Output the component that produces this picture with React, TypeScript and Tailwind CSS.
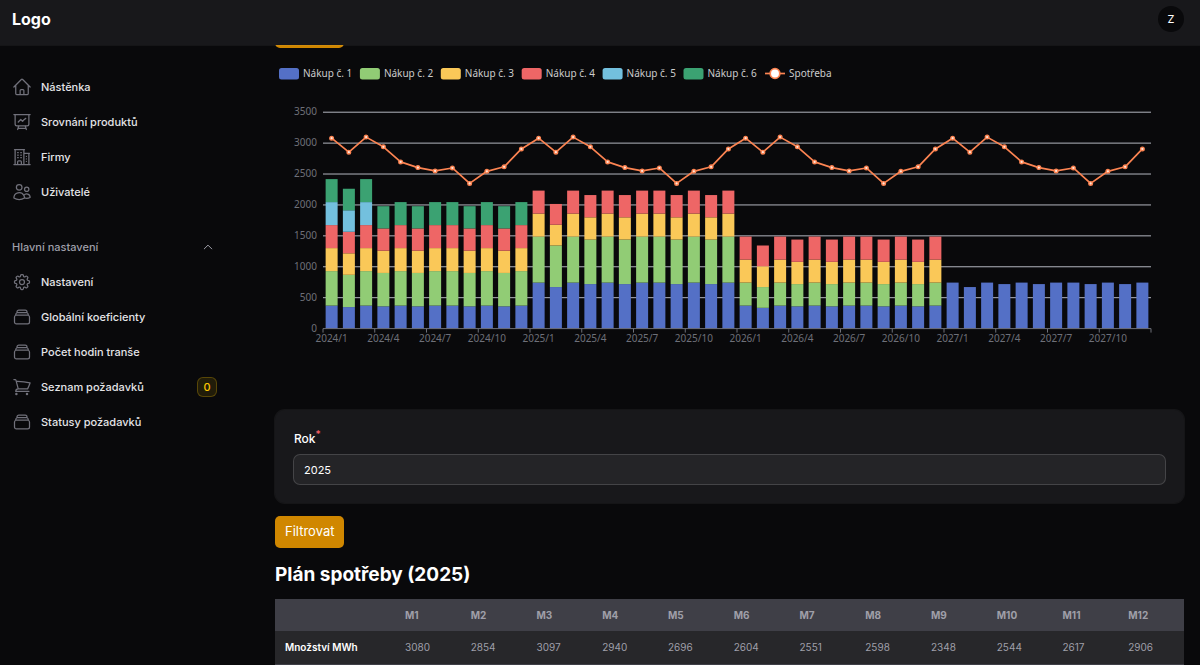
import { useState } from 'react';
import type { IconType } from 'react-icons';
import {
  HiOutlineBuildingOffice2,
  HiOutlineChevronUp,
  HiOutlineCog8Tooth,
  HiOutlineHome,
  HiOutlinePresentationChartLine,
  HiOutlineRectangleStack,
  HiOutlineShoppingCart,
  HiOutlineUsers,
} from 'react-icons/hi2';

type NavItem = { label: string; icon: IconType; badge?: number };

const mainLinks: NavItem[] = [
  { label: 'Nástěnka', icon: HiOutlineHome },
  { label: 'Srovnání produktů', icon: HiOutlinePresentationChartLine },
  { label: 'Firmy', icon: HiOutlineBuildingOffice2 },
  { label: 'Uživatelé', icon: HiOutlineUsers },
];

const settingsLinks: NavItem[] = [
  { label: 'Nastavení', icon: HiOutlineCog8Tooth },
  { label: 'Globální koeficienty', icon: HiOutlineRectangleStack },
  { label: 'Počet hodin tranše', icon: HiOutlineRectangleStack },
  { label: 'Seznam požadavků', icon: HiOutlineShoppingCart, badge: 0 },
  { label: 'Statusy požadavků', icon: HiOutlineRectangleStack },
];

const consumption = [3080, 2854, 3097, 2940, 2696, 2604, 2551, 2598, 2348, 2544, 2617, 2906];

const series = [
  { name: 'Nákup č. 1', color: '#5470c6' },
  { name: 'Nákup č. 2', color: '#91cc75' },
  { name: 'Nákup č. 3', color: '#fac858' },
  { name: 'Nákup č. 4', color: '#ee6666' },
  { name: 'Nákup č. 5', color: '#73c0de' },
  { name: 'Nákup č. 6', color: '#3ba272' },
];

// purchased power in MW per series, by year
const power: Record<number, number[]> = {
  2024: [0.5, 0.75, 0.5, 0.5, 0, 0.5],
  2025: [1, 1, 0.5, 0.5, 0, 0],
  2026: [0.5, 0.5, 0.5, 0.5, 0, 0],
  2027: [1, 0, 0, 0, 0, 0],
};

const months = [2024, 2025, 2026, 2027].flatMap((year) =>
  consumption.map((used, i) => {
    const hours = new Date(year, i + 1, 0).getDate() * 24;
    const mw = [...power[year]];
    // purchase no. 5 covers the first quarter of 2024 only
    if (year === 2024 && i < 3) mw[4] = 0.5;
    return { label: `${year}/${i + 1}`, used, values: mw.map((v) => v * hours) };
  })
);

const LEFT = 48;
const RIGHT = 876;
const BASE = 264.6;
const STEP = (RIGHT - LEFT) / months.length;
const BAR = 12;

const yOf = (value: number) => BASE - (value * 216.4) / 3500;
const xOf = (index: number) => LEFT + STEP * (index + 0.5);

function Chart() {
  const points = months.map((m, i) => `${xOf(i)},${yOf(m.used)}`).join(' ');

  return (
    <svg viewBox="0 0 909 346" className="mt-4 block w-full font-['Noto_Sans',sans-serif] text-[10px]">
      {series.map((s, i) => (
        <g key={s.name}>
          <rect x={4 + i * 80.9} y={4} width={20} height={11.5} rx={2.5} fill={s.color} />
          <text x={28 + i * 80.9} y={13} fill="#cccccc">{s.name}</text>
        </g>
      ))}
      <line x1={490} x2={510} y1={9.5} y2={9.5} stroke="#fc8452" strokeWidth={1.7} />
      <circle cx={500} cy={9.5} r={4.8} fill="#fff" stroke="#fc8452" strokeWidth={1.7} />
      <text x={514} y={13} fill="#cccccc">Spotřeba</text>

      {[500, 1000, 1500, 2000, 2500, 3000, 3500].map((v) => (
        <line key={v} x1={LEFT} x2={RIGHT} y1={yOf(v)} y2={yOf(v)} stroke="#c6cad4" strokeWidth={0.9} />
      ))}
      {[0, 500, 1000, 1500, 2000, 2500, 3000, 3500].map((v) => (
        <text key={v} x={42} y={yOf(v) + 3} textAnchor="end" fill="#6e7079">{v}</text>
      ))}

      {months.map((m, i) => {
        let total = 0;
        return (
          <g key={m.label}>
            {m.values.map((value, n) => {
              if (!value) return null;
              total += value;
              return (
                <rect
                  key={n}
                  x={xOf(i) - BAR / 2}
                  y={yOf(total)}
                  width={BAR}
                  height={yOf(0) - yOf(value)}
                  fill={series[n].color}
                />
              );
            })}
          </g>
        );
      })}

      <line x1={LEFT} x2={RIGHT} y1={BASE} y2={BASE} stroke="#6e7079" />
      {months.map((m, i) =>
        i % 3 === 0 ? (
          <g key={m.label}>
            <line x1={LEFT + i * STEP} x2={LEFT + i * STEP} y1={BASE} y2={BASE + 4} stroke="#6e7079" />
            <text x={xOf(i)} y={278} textAnchor="middle" fill="#6e7079">{m.label}</text>
          </g>
        ) : null
      )}
      <line x1={RIGHT} x2={RIGHT} y1={BASE} y2={BASE + 4} stroke="#6e7079" />

      <polyline points={points} fill="none" stroke="#fc8452" strokeWidth={1.7} strokeLinejoin="bevel" />
      {months.map((m, i) => (
        <circle key={m.label} cx={xOf(i)} cy={yOf(m.used)} r={1.8} fill="#ffe6da" stroke="#fc8452" strokeWidth={1.4} />
      ))}
    </svg>
  );
}

function NavList({ items }: { items: NavItem[] }) {
  return (
    <ul className="flex flex-col gap-[3px]">
      {items.map(({ label, icon: Icon, badge }) => (
        <li key={label}>
          <a href="#" className="flex h-8 items-center gap-[9px] text-[11px] font-medium text-zinc-200">
            <Icon size={20} className="shrink-0 text-zinc-500" />
            <span className="flex-1">{label}</span>
            {badge !== undefined && (
              <span className="flex size-5 items-center justify-center rounded-md border border-yellow-400/25 bg-yellow-400/10 text-[11px] text-yellow-400">
                {badge}
              </span>
            )}
          </a>
        </li>
      ))}
    </ul>
  );
}

export default function App() {
  const [year, setYear] = useState('2025');
  const [open, setOpen] = useState(true);

  return (
    <div className="min-h-screen bg-[#09090b] font-['Inter',sans-serif] text-white antialiased">
      <header className="sticky top-0 z-10 flex h-[45px] items-center justify-between bg-zinc-900 pr-4 pb-[7px] pl-3 ring-1 ring-white/5">
        <a href="#" className="text-[16px] font-bold">Logo</a>
        <button className="flex size-[26px] items-center justify-center rounded-full bg-[#09090b] text-[11px]">
          Z
        </button>
      </header>

      <div className="flex">
        <aside className="w-[217px] shrink-0 pt-[26px] pl-3">
          <nav>
            <NavList items={mainLinks} />
            <button
              onClick={() => setOpen(!open)}
              className="mt-[23px] mb-[3px] flex h-8 w-full items-center justify-between text-[11px] font-medium text-zinc-400"
            >
              Hlavní nastavení
              <HiOutlineChevronUp size={18} className={open ? 'p-[3px]' : 'rotate-180 p-[3px]'} strokeWidth={2} />
            </button>
            {open && <NavList items={settingsLinks} />}
          </nav>
        </aside>

        <main className="min-w-0 flex-1 pr-4 pl-[58px]">
          <button className="-mt-[29px] block h-8 rounded-[5px] bg-yellow-600 px-[10px] text-[13px]">
            Filtrovat
          </button>

          <Chart />

          <form onSubmit={(e) => e.preventDefault()}>
            <section className="rounded-[10px] bg-zinc-900 p-[18px] ring-1 ring-white/5">
              <label htmlFor="year" className="flex h-[21px] items-center pl-[1px] text-[12px] font-medium">
                Rok<sup className="text-[10px] text-red-400">*</sup>
              </label>
              <input
                id="year"
                value={year}
                onChange={(e) => setYear(e.target.value)}
                className="mt-[5px] block h-[31px] w-full rounded-[7px] border border-white/15 bg-[#242427] px-[10px] text-[11px] outline-none"
              />
            </section>
            <button className="mt-[13px] block h-8 rounded-[5px] bg-yellow-600 px-[10px] text-[13px]">
              Filtrovat
            </button>
          </form>

          <h2 className="flex h-[51px] items-center pt-[3px] text-[19px] font-bold">Plán spotřeby (2025)</h2>

          <table className="w-full table-fixed text-left text-[10px] text-zinc-400">
            <thead className="bg-zinc-700">
              <tr className="h-8">
                <th className="w-[120px]" />
                {consumption.map((_, i) => (
                  <th key={i} className="px-[10px] font-bold">M{i + 1}</th>
                ))}
              </tr>
            </thead>
            <tbody>
              <tr className="h-[33px] border-b border-zinc-700 bg-zinc-800">
                <th className="px-[10px] font-semibold whitespace-nowrap text-white">Množství MWh</th>
                {consumption.map((value, i) => (
                  <td key={i} className="px-[10px]">{value}</td>
                ))}
              </tr>
            </tbody>
          </table>
        </main>
      </div>
    </div>
  );
}
